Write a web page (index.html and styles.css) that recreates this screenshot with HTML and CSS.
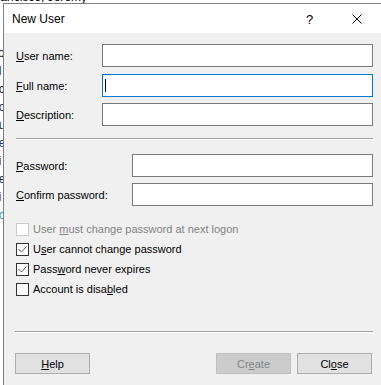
FILE: index.html
```html
<!DOCTYPE html>
<html lang="en">
  <head>
    <meta charset="UTF-8" />
    <title>New User</title>
    <link rel="stylesheet" href="styles.css">
  </head>
  <body>
    <div class="desktop">
      <div class="bg-line top">Francisco, Jeremy</div>
      <div class="bg-list">
        <div class="bg-line dark">co</div>
        <div class="bg-line dark">ol</div>
        <div class="bg-line dark">oc</div>
        <div class="bg-line dark">ao</div>
        <div class="bg-line dark">au</div>
        <div class="bg-line blue">ee</div>
        <div class="bg-line red">ai</div>
        <div class="bg-line dark">oe</div>
        <div class="bg-line red">ei</div>
        <div class="bg-line cyan">oc</div>
      </div>
    </div>

    <div class="dialog">
      <div class="titlebar">
        <span class="title">New User</span>
        <span class="help-btn">?</span>
        <span class="close-btn">
          <svg width="10" height="10" viewBox="0 0 10 10">
            <path d="M0.5 0.5 L9.5 9.5 M9.5 0.5 L0.5 9.5" stroke="#000" stroke-width="1" fill="none" />
          </svg>
        </span>
      </div>

      <div class="content">
        <div class="fields names">
          <label><u>U</u>ser name:</label>
          <div class="textbox"></div>
          <label><u>F</u>ull name:</label>
          <div class="textbox focused"><span class="caret"></span></div>
          <label><u>D</u>escription:</label>
          <div class="textbox"></div>
        </div>

        <div class="separator"></div>

        <div class="fields passwords">
          <label><u>P</u>assword:</label>
          <div class="textbox"></div>
          <label><u>C</u>onfirm password:</label>
          <div class="textbox"></div>
        </div>

        <div class="checks">
          <div class="check disabled">
            <span class="box"></span>
            <span>User <u>m</u>ust change password at next logon</span>
          </div>
          <div class="check">
            <span class="box">
              <svg width="11" height="11" viewBox="0 0 11 11">
                <path d="M1.5 5 L4.5 8 L9.5 2.5" stroke="#555" stroke-width="1" fill="none" />
              </svg>
            </span>
            <span>U<u>s</u>er cannot change password</span>
          </div>
          <div class="check">
            <span class="box">
              <svg width="11" height="11" viewBox="0 0 11 11">
                <path d="M1.5 5 L4.5 8 L9.5 2.5" stroke="#555" stroke-width="1" fill="none" />
              </svg>
            </span>
            <span>Pass<u>w</u>ord never expires</span>
          </div>
          <div class="check">
            <span class="box"></span>
            <span>Account is disa<u>b</u>led</span>
          </div>
        </div>

        <div class="separator bottom"></div>

        <div class="buttons">
          <button class="btn help"><u>H</u>elp</button>
          <div class="spacer"></div>
          <button class="btn" disabled>Cr<u>e</u>ate</button>
          <button class="btn">Cl<u>o</u>se</button>
        </div>
      </div>
    </div>
  </body>
</html>
```

FILE: styles.css
```css
body {
  margin: 0;
  background-color: #fff;
  font-family: "Liberation Sans", Arial, sans-serif;
  font-size: 11px;
  color: #000;
  overflow: hidden;
  width: 381px;
  height: 385px;
  position: relative;
}

/* window behind the dialog */
.desktop {
  position: absolute;
  left: 0;
  top: 0;
  width: 381px;
  height: 385px;
  overflow: hidden;
}

.bg-line {
  font-size: 12px;
  line-height: 14px;
  white-space: nowrap;
}

.bg-line.top {
  position: absolute;
  left: -11px;
  top: -10px;
  color: #000;
}

.bg-list {
  position: absolute;
  left: -8px;
  top: 44px;
}

.bg-list .bg-line {
  line-height: 18px;
}

.dark {
  color: #1a1a40;
}

.blue {
  color: #2030a0;
}

.red {
  color: #802020;
}

.cyan {
  color: #20a0d0;
}

/* dialog */
.dialog {
  position: absolute;
  left: 3px;
  top: 3px;
  width: 381px;
  height: 390px;
  border-left: 1px solid #808080;
  border-top: 1px solid #808080;
  background-color: #f0f0f0;
}

.titlebar {
  height: 29px;
  background-color: #fff;
  display: flex;
  align-items: center;
  padding-left: 8px;
}

.title {
  font-size: 12px;
  flex: 1;
  padding-top: 1px;
}

.help-btn {
  font-size: 13px;
  width: 10px;
  margin-right: 36px;
  padding-top: 1px;
}

.close-btn {
  display: flex;
  margin-right: 23px;
  margin-top: 1px;
}

.content {
  padding: 11px 12px 0 12px;
}

.fields {
  display: grid;
  align-items: center;
}

.fields.names {
  grid-template-columns: 86px 271px;
  row-gap: 6.5px;
}

.fields.passwords {
  grid-template-columns: 116px 241px;
  row-gap: 6px;
}

label {
  padding-top: 1px;
}

.textbox {
  height: 21px;
  background-color: #fff;
  border: 1px solid #7a7a7a;
  display: flex;
  align-items: center;
}

.textbox.focused {
  border-color: #0078d7;
}

.caret {
  width: 1px;
  height: 13px;
  margin-left: 2px;
  background-color: #000;
}

.separator {
  height: 1px;
  background-color: #a0a0a0;
  border-bottom: 1px solid #fff;
  margin: 12px 0 14px;
}

.separator.bottom {
  margin: 32px 0 20px -1px;
}

.checks {
  margin-top: 13px;
}

.check {
  height: 20px;
  display: flex;
  align-items: center;
  white-space: nowrap;
}

.box {
  width: 11px;
  height: 11px;
  border: 1px solid #333;
  background-color: #fff;
  margin-right: 4px;
  display: flex;
}

.check.disabled {
  color: #838383;
}

.check.disabled .box {
  border-color: #cccccc;
}

.buttons {
  display: flex;
  gap: 6px;
  margin-left: -1px;
}

.spacer {
  flex: 1;
}

.btn {
  width: 75px;
  height: 21px;
  padding: 0;
  font-family: "Liberation Sans", Arial, sans-serif;
  font-size: 11px;
  color: #000;
  background-color: #e1e1e1;
  border: 1px solid #adadad;
}

.btn:disabled {
  background-color: #cccccc;
  border-color: #bfbfbf;
  color: #838383;
}

.buttons .btn:last-child {
  margin-right: 1px;
}
```
